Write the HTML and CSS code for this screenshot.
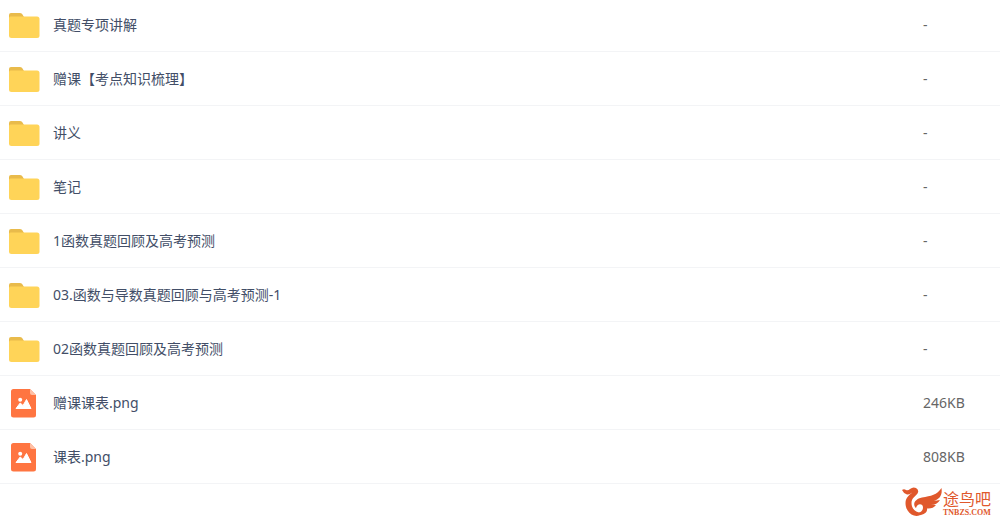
FILE: index.html
```html
<!DOCTYPE html>
<html lang="zh-CN">
<head>
<meta charset="utf-8">
<title>文件列表</title>
<link rel="stylesheet" href="styles.css">
</head>
<body>
<svg class="sprite" aria-hidden="true">
  <symbol id="folder" viewBox="0 -2 32 30">
    <path fill="#e9bb4b" d="M1 10V3Q1 1 3 1H12Q14 1 14.500 2.500L16 5V10Z"/>
    <path fill="#ffd458" d="M1 6Q1 4.500 2.500 4.500H29Q31.500 4.500 31.500 7V23.500Q31.500 26 29 26H3.500Q1 26 1 23.500Z"/>
  </symbol>
  <symbol id="image" viewBox="0 0 32 30">
    <path fill="#ff7541" d="M5 1H22L28 7V27Q28 29.500 25.500 29.500H5.500Q3 29.500 3 27V3.500Q3 1 5.500 1Z"/>
    <path fill="#ffc0a5" d="M22 1L28 7H24Q22 7 22 5Z"/>
    <circle cx="12.200" cy="11.700" r="2" fill="#fff"/>
    <path fill="#fff" stroke="#fff" stroke-linejoin="round" d="M8 20.500L12.200 15L15 17.500L18.500 11.500L23 20.500Z"/>
  </symbol>
</svg>
<main>
  <table class="files">
    <tbody>
      <tr><td class="name"><div class="file"><svg class="icon"><use href="#folder"/></svg><span>真题专项讲解</span></div></td><td class="size">-</td></tr>
      <tr><td class="name"><div class="file"><svg class="icon"><use href="#folder"/></svg><span>赠课【考点知识梳理】</span></div></td><td class="size">-</td></tr>
      <tr><td class="name"><div class="file"><svg class="icon"><use href="#folder"/></svg><span>讲义</span></div></td><td class="size">-</td></tr>
      <tr><td class="name"><div class="file"><svg class="icon"><use href="#folder"/></svg><span>笔记</span></div></td><td class="size">-</td></tr>
      <tr><td class="name"><div class="file"><svg class="icon"><use href="#folder"/></svg><span>1函数真题回顾及高考预测</span></div></td><td class="size">-</td></tr>
      <tr><td class="name"><div class="file"><svg class="icon"><use href="#folder"/></svg><span>03.函数与导数真题回顾与高考预测-1</span></div></td><td class="size">-</td></tr>
      <tr><td class="name"><div class="file"><svg class="icon"><use href="#folder"/></svg><span>02函数真题回顾及高考预测</span></div></td><td class="size">-</td></tr>
      <tr><td class="name"><div class="file"><svg class="icon"><use href="#image"/></svg><span>赠课课表.png</span></div></td><td class="size">246KB</td></tr>
      <tr><td class="name"><div class="file"><svg class="icon"><use href="#image"/></svg><span>课表.png</span></div></td><td class="size">808KB</td></tr>
    </tbody>
  </table>
</main>
<div class="watermark">
  <svg class="bird" viewBox="0 0 42 32" aria-hidden="true">
    <g fill="#e0582c">
      <path d="M1 3Q3 1.500 5 3Q7 4 9 2Q12 -.500 15 1Q18.500 3 16.500 6.500C14.500 9.500 10.500 11 10.500 16C10.500 21 14 26 21 26Q18 30 13 28.500C8 27 4.500 22 4.500 16C4.500 10 9 8 11 5.500Q8 8.500 5 7Q2.500 6 1 3Z"/>
      <path d="M40.500 1C41.500 8 39 12 33 14L39 13Q36 18 30 18L35 18Q32 22 26 21.500Q27 26 20 28C16 29 13 28 11 26C17 27 22 25 22 20.500C22 16 16 16 15 21C11 17 14 12 21 10.500C30 9 36 8 40.500 1Z"/>
    </g>
  </svg>
  <div class="brand"><span class="brand-name">途鸟吧</span><span class="brand-site">TNBZS.COM</span></div>
</div>
</body>
</html>
```
FILE: styles.css
```css
body {
  margin: 0;
  background: #fff;
  font-family: "Noto Sans", "Noto Sans CJK SC", sans-serif;
  font-size: 14px;
  line-height: 20px;
  color: #424e67;
  overflow: hidden;
}

.sprite {
  position: absolute;
  width: 0;
  height: 0;
}

/* The list is scrolled slightly past its top edge. */
.files {
  width: 100%;
  margin-top: -2px;
  border-collapse: separate;
  border-spacing: 0;
}

.files td {
  height: 53px;
  padding: 0;
  border-bottom: 1px solid #f3f4f6;
  vertical-align: middle;
}

.files .name {
  padding-left: 8px;
}

.files .size {
  width: 77px;
  color: #666;
}

.file {
  display: flex;
  align-items: center;
  gap: 13px;
}

.icon {
  width: 32px;
  height: 30px;
  flex: none;
}

.watermark {
  position: absolute;
  right: 9px;
  bottom: 2px;
  display: flex;
  align-items: center;
}

.bird {
  width: 42px;
  height: 32px;
}

.brand {
  display: flex;
  flex-direction: column;
  width: 48px;
  color: #e0582c;
}

.brand-name {
  font-size: 16px;
  line-height: 20px;
}

.brand-site {
  font-family: "Liberation Serif", serif;
  font-size: 8px;
  font-weight: bold;
  line-height: 8px;
}
```
